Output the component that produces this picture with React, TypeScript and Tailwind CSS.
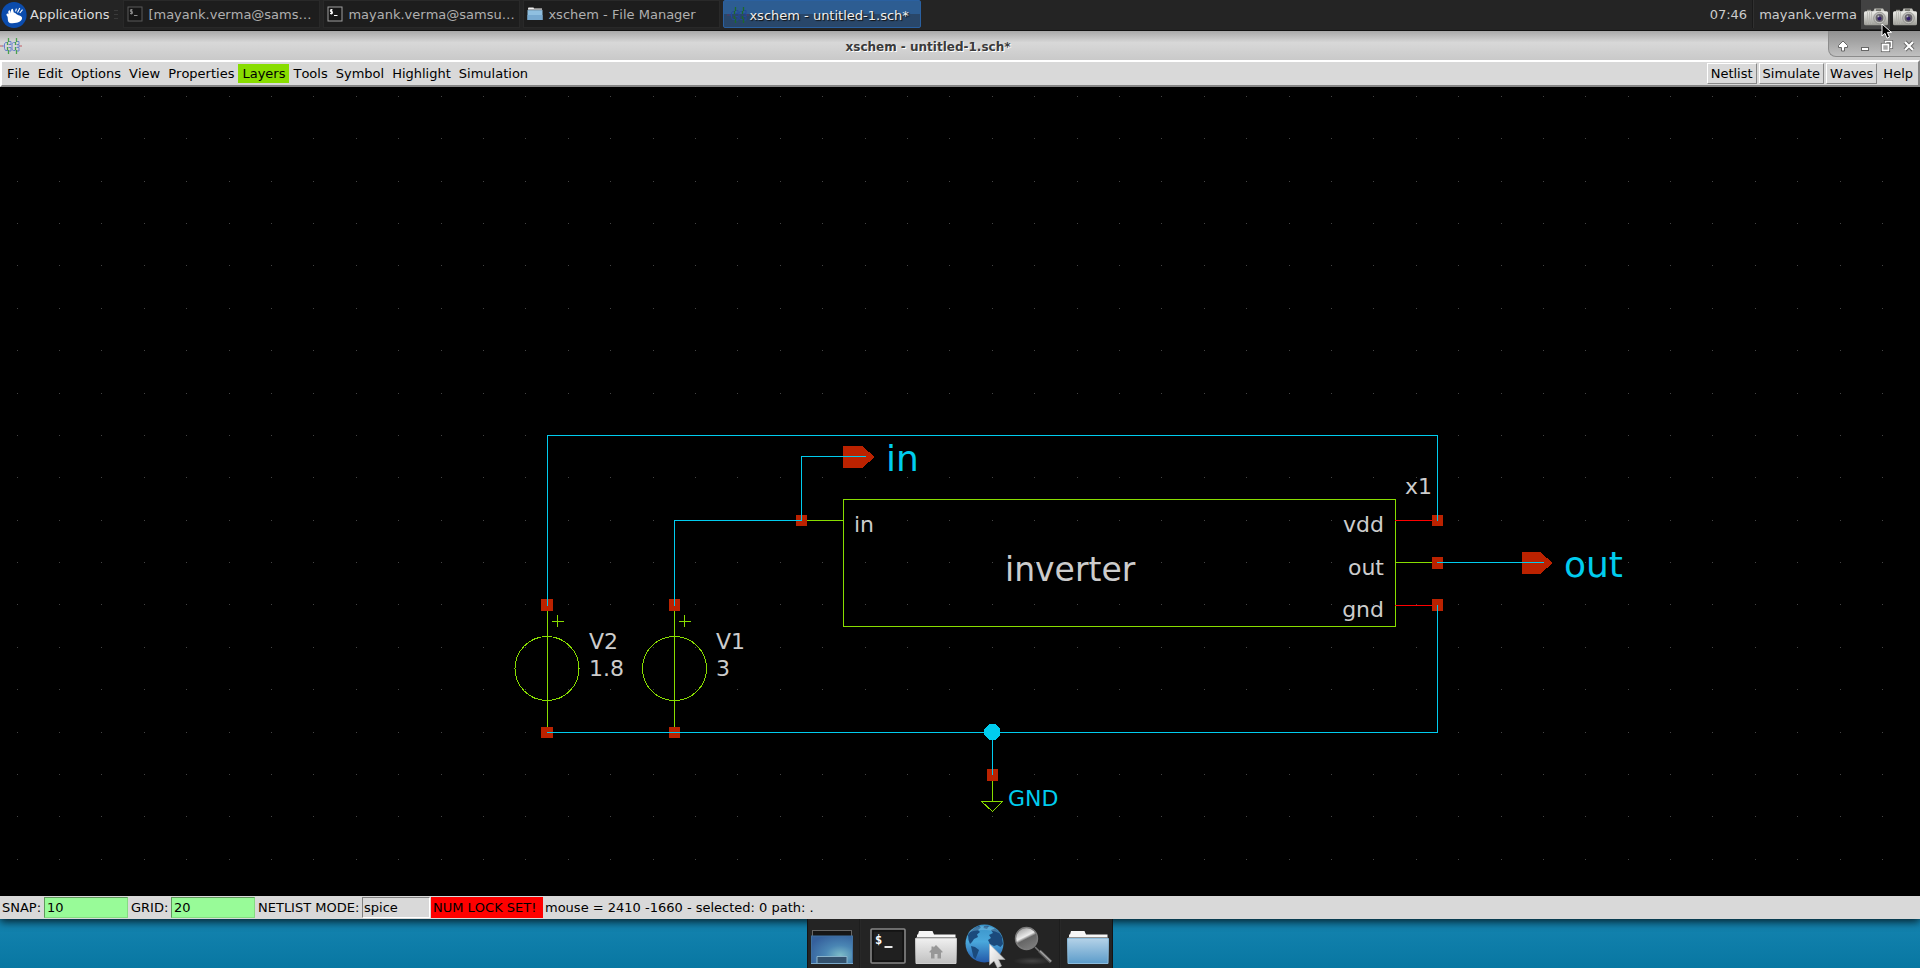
import React from "react";

const WIRE = "#00ccee";
const SYM = "#88dd00";
const PIN = "#bb2200";
const TXT = "#cccccc";
const POWER = "#ff0000";

const PITCH = 42.395;
const GRID_X = Array.from({ length: 45 }, (_, i) => Math.floor(17.19 + PITCH * i));
const GRID_Y = Array.from({ length: 19 }, (_, i) => Math.floor(96.25 + PITCH * i));

function H({ x1, x2, y, c = WIRE }: { x1: number; x2: number; y: number; c?: string }) {
  return <rect x={x1} y={y} width={x2 - x1 + 1} height={1} fill={c} />;
}

function V({ x, y1, y2, c = WIRE }: { x: number; y1: number; y2: number; c?: string }) {
  return <rect x={x} y={y1} width={1} height={y2 - y1 + 1} fill={c} />;
}

function Pin({ x, y, w = 11, h = 11 }: { x: number; y: number; w?: number; h?: number }) {
  return <rect x={x} y={y} width={w} height={h} fill={PIN} />;
}

function Source({ x, cx, plus }: { x: number; cx: number; plus: number }) {
  return (
    <g>
      <V x={x} y1={605} y2={732} c={SYM} />
      <circle cx={cx} cy={668.5} r={32} fill="none" stroke={SYM} />
      <H x1={plus - 5} x2={plus + 6} y={621} c={SYM} />
      <V x={plus} y1={615} y2={626} c={SYM} />
    </g>
  );
}

function Schematic() {
  return (
    <svg
      viewBox="0 87 1920 809"
      className="block min-h-0 w-full flex-1 bg-black"
      role="img"
      aria-label="Schematic"
      fontFamily="'DejaVu Sans', sans-serif"
    >
      <g shapeRendering="crispEdges">
        {GRID_Y.map((y) =>
          GRID_X.map((x) => <rect key={`${x}-${y}`} x={x} y={y} width={1} height={1} fill="#444444" />)
        )}
        <rect x={843.5} y={499.5} width={552} height={127} fill="none" stroke={SYM} />
        <H x1={801} x2={843} y={520} c={SYM} />
        <H x1={1395} x2={1437} y={520} c={POWER} />
        <H x1={1395} x2={1437} y={562} c={SYM} />
        <H x1={1395} x2={1437} y={605} c={POWER} />
        <Source x={547} cx={547} plus={557} />
        <Source x={674} cx={674.5} plus={684} />
        <V x={992} y1={775} y2={801} c={SYM} />
        <path d="M981.5 801.5H1002.5L992.5 811.5Z" fill="none" stroke={SYM} />

        <Pin x={541} y={599} w={12} h={12} />
        <Pin x={669} y={599} h={12} />
        <Pin x={541} y={727} w={12} />
        <Pin x={669} y={727} />
        <Pin x={796} y={515} />
        <Pin x={1432} y={515} />
        <Pin x={1432} y={557} h={12} />
        <Pin x={1432} y={599} h={12} />
        <Pin x={987} y={769} h={12} />
        <path d="M843 446H862L875 457L862 468H843Z" fill={PIN} />
        <path d="M1522 552H1540L1553 563L1540 574H1522Z" fill={PIN} />

        <V x={547} y1={435} y2={605} />
        <H x1={547} x2={1437} y={435} />
        <V x={1437} y1={435} y2={520} />
        <V x={674} y1={520} y2={605} />
        <H x1={674} x2={801} y={520} />
        <V x={801} y1={456} y2={520} />
        <H x1={801} x2={865} y={456} />
        <H x1={1437} x2={1543} y={562} />
        <V x={1437} y1={605} y2={732} />
        <H x1={547} x2={1437} y={732} />
        <V x={992} y1={732} y2={774} />
        <path d="M989 724H995L1000 729V735L995 740H989L984 735V729Z" fill={WIRE} />
      </g>
      <g fontSize={22} fill={TXT}>
        <text x={589} y={649}>V2</text>
        <text x={589} y={676}>1.8</text>
        <text x={716} y={649}>V1</text>
        <text x={716} y={676}>3</text>
        <text x={854} y={532}>in</text>
        <text x={1384} y={532} textAnchor="end">vdd</text>
        <text x={1384} y={575} textAnchor="end">out</text>
        <text x={1384} y={617} textAnchor="end">gnd</text>
        <text x={1405} y={494}>x1</text>
        <text x={1008} y={806} fill={WIRE}>GND</text>
      </g>
      <text x={1005} y={581} fontSize={33} fill={TXT}>inverter</text>
      <g fontSize={36} fill={WIRE}>
        <text x={886} y={471}>in</text>
        <text x={1564} y={577}>out</text>
      </g>
    </svg>
  );
}

function XfceLogo() {
  return (
    <svg width="26" height="28" viewBox="0 0 26 28" aria-hidden="true">
      <ellipse cx="13" cy="15" rx="12.6" ry="13" fill="#0b4cad" />
      <path
        d="M5.5 14.2C6 13 7 13.4 7.6 14.2C7.2 12.4 7 10.8 8 10.4C9.2 10 9.5 12 10 13.2C9.8 11 10 8.8 11.2 8.8C12.4 8.8 12.2 11 12.8 12.6C13.8 12.6 14.6 13.6 16 14.4C18 15.4 20.5 15.6 21 17.4C21.5 19.6 19 22 15.5 22.8C12 23.6 8 23.6 7.2 21.5C6.6 19.6 7 18 6.4 16.6C6 15.8 5.2 15.2 5.5 14.2Z"
        fill="#fff"
      />
      <path d="M16.5 12.6L18.8 8M18.8 13L21.5 9.6M14.6 11.5L15.4 8.6" stroke="#fff" strokeWidth="1.1" />
    </svg>
  );
}

function SmallTerminal({ dim = false }: { dim?: boolean }) {
  const edge = dim ? "#5a5a5a" : "#a0a0a0";
  const ink = dim ? "#8c8c8c" : "#ffffff";
  return (
    <svg width="16" height="16" viewBox="0 0 16 16" aria-hidden="true">
      <rect x="1" y="1" width="14" height="14" fill="#161616" stroke={edge} />
      <path d="M5.6 3.8H3.4V5.6H5.4V7.6H3M4.4 3V8.4M7 9.5H10.5" fill="none" stroke={ink} />
    </svg>
  );
}

function SmallFolder() {
  return (
    <svg width="16" height="16" viewBox="0 0 16 16" aria-hidden="true">
      <path d="M1 2.5L1.5 1.5H6.5L7 2.5H15V6H1Z" fill="#f2f2f2" />
      <rect x="0.5" y="4" width="15" height="10" fill="#8fbfe0" />
      <rect x="0.5" y="9" width="15" height="5" fill="#77a9d0" />
      <path d="M0.5 3.8H15.5" stroke="#3b4148" strokeWidth="0.6" />
    </svg>
  );
}

function GatesIcon({ dark = false }: { dark?: boolean }) {
  const g = dark ? "#1c6a2c" : "#4ba14e";
  const b = dark ? "#23479c" : "#6a83cf";
  const r = dark ? "#5c3a5a" : "#c25f66";
  return (
    <svg width="22" height="16" viewBox="0 0 22 16" aria-hidden="true" fill="none">
      <path d="M0 8H3M19 8H22" stroke={r} />
      <path d="M2.5 8H4M8 4.5H5.5L4.5 6V10.5L5.5 12.5H8M8.5 3.5H11V6.5H8.5M8.5 9.5H11V13H8.5M12 8V5.5L13.5 4.5H15.5M12 8V11.5L13.5 12.5H15.5M16.5 3.5H19V6.5H16.5M16.5 9.5H19V13H16.5M17.5 8H20" stroke={b} />
      <path d="M8.5 0V4M8.5 12V16M16.5 0V4M16.5 12V16M7.5 4V7M7.5 9V12M15.5 4V7M15.5 9V12" stroke={g} strokeWidth="1.3" />
    </svg>
  );
}

function Camera() {
  return (
    <svg width="24" height="18" viewBox="0 0 24 18" aria-hidden="true">
      <defs>
        <linearGradient id="cam" x1="0" y1="0" x2="0" y2="1">
          <stop offset="0" stopColor="#eeeeea" />
          <stop offset="0.4" stopColor="#cfcfca" />
          <stop offset="1" stopColor="#9c9c96" />
        </linearGradient>
      </defs>
      <path d="M10.5 0.5H19L21 4H9Z" fill="#c4c4be" />
      <rect x="12" y="1.2" width="5" height="1.8" fill="#77776f" />
      <rect x="3" y="1.8" width="4" height="2" fill="#94948e" />
      <rect x="0" y="3.2" width="24" height="14" rx="1.5" fill="url(#cam)" />
      <path d="M3.5 4V16M5.5 4V16M7.5 4V16" stroke="#b4b4ae" strokeWidth="0.8" />
      <circle cx="15.5" cy="10" r="5.8" fill="#bdbdb9" stroke="#8a8a86" strokeWidth="0.8" />
      <circle cx="15.5" cy="10" r="3.9" fill="#66646a" />
      <circle cx="15.5" cy="10.4" r="2" fill="#33206a" />
      <circle cx="14.4" cy="8.4" r="0.9" fill="#b9b5c6" />
    </svg>
  );
}

const GLYPH = "h-[14px] w-[14px]";

function WindowButtons() {
  return (
    <div className="flex h-[26px] w-[92px] items-center justify-end self-start rounded-bl-lg border-b border-l border-[#8c8c8c] bg-linear-to-b from-[#909090] via-[#a8a8a8] to-[#c0c0c0] pt-1">
      <button aria-label="Shade" className="flex h-5 w-[22px] items-center justify-center">
        <svg viewBox="0 0 14 14" className={GLYPH}>
          <path d="M7 2L11.5 6.5V8.5H8.5V12H5.5V8.5H2.5V6.5Z" fill="#fff" stroke="#666" strokeWidth="1" />
        </svg>
      </button>
      <button aria-label="Minimize" className="flex h-5 w-[22px] items-center justify-center">
        <svg viewBox="0 0 14 14" className={GLYPH}>
          <rect x="3.5" y="8.5" width="7" height="3" fill="#fff" stroke="#666" />
        </svg>
      </button>
      <button aria-label="Restore" className="flex h-5 w-[22px] items-center justify-center">
        <svg viewBox="0 0 14 14" className={GLYPH} fill="none">
          <path d="M5.5 5V2.5H11.5V8.5H9" stroke="#666" strokeWidth="3.2" />
          <path d="M5.5 5V2.5H11.5V8.5H9" stroke="#fff" strokeWidth="1.6" />
          <rect x="2.5" y="5.5" width="6" height="6" stroke="#666" strokeWidth="3.2" />
          <rect x="2.5" y="5.5" width="6" height="6" fill="#aaa" stroke="#fff" strokeWidth="1.6" />
        </svg>
      </button>
      <button aria-label="Close" className="flex h-5 w-[22px] items-center justify-center">
        <svg viewBox="0 0 14 14" className={GLYPH}>
          <path d="M3 3L11 11M11 3L3 11" stroke="#666" strokeWidth="4" />
          <path d="M3 3L11 11M11 3L3 11" stroke="#fff" strokeWidth="2.2" />
        </svg>
      </button>
    </div>
  );
}

const TASK = "flex h-7 w-[197px] items-center gap-[5px] border border-[#292929] bg-[#1d1d1d] pl-[3px] text-left whitespace-nowrap";

function Taskbar() {
  return (
    <header className="relative flex h-[31px] items-center border-b border-[#111111] bg-[#242424] pb-[2px] text-[#b0b0b0]">
      <button className="flex h-full items-center gap-[3px] pl-[1px] text-[#dddddd]">
        <XfceLogo />
        Applications
      </button>
      <div className="mx-[5px] flex w-1 flex-col gap-[3px]">
        <span className="h-px bg-[#3a3a3a]" />
        <span className="h-px bg-[#3a3a3a]" />
        <span className="h-px bg-[#3a3a3a]" />
      </div>
      <nav className="flex gap-[3px]" aria-label="Windows">
        <button className={TASK}>
          <SmallTerminal dim />
          [mayank.verma@sams…
        </button>
        <button className={TASK}>
          <SmallTerminal />
          mayank.verma@samsu…
        </button>
        <button className={TASK}>
          <SmallFolder />
          xschem - File Manager
        </button>
        <button className="flex h-7 w-[198px] items-center rounded-xs border border-[#2a60a0] bg-linear-to-b from-[#2d5d92] from-50% to-[#29476a] to-50% pt-[2px] pl-[3px] text-left whitespace-nowrap text-[#f0f0f0] text-shadow-[1px_1px_1px_#111111]">
          <GatesIcon dark />
          xschem - untitled-1.sch*
        </button>
      </nav>
      <div className="ml-auto flex h-full items-center text-[#cccccc]">
        <span>07:46</span>
        <span className="mx-[5px] h-7 w-[2px] border-l border-[#1a1a1a] bg-[#303030]" />
        <span className="mr-1">mayank.verma</span>
        <button aria-label="Screenshot" className="flex h-[29px] w-[29px] items-center justify-center self-start bg-[#424242] pt-[5px]">
          <Camera />
        </button>
        <button aria-label="Screenshot tool" className="flex h-[29px] w-[30px] items-center justify-center self-start pt-[5px]">
          <Camera />
        </button>
      </div>
      <svg className="absolute top-[23px] right-[27px] z-10" width="12" height="17" viewBox="0 0 12 17" aria-hidden="true">
        <path d="M1 1V13L4 10.3L6 15.2L8.5 14.1L6.4 9.4H10.5Z" fill="#000" stroke="#fff" strokeWidth="1" />
      </svg>
    </header>
  );
}

const MENU = "h-[19px] px-1";
const RAISED = "h-[21px] border border-t-white border-r-[#888888] border-b-[#888888] border-l-white px-[3px]";

function MenuBar() {
  return (
    <nav
      className="flex h-[27px] items-center justify-between border-2 border-t-white border-r-[#858585] border-b-[#858585] border-l-white bg-[#d9d9d9] pr-[1px] pl-[1px]"
      aria-label="Menu"
    >
      <div className="flex items-center">
        <button className={MENU}>File</button>
        <button className={MENU}>Edit</button>
        <button className={MENU}>Options</button>
        <button className={MENU}>View</button>
        <button className={MENU}>Properties</button>
        <button className="h-[19px] bg-[#88dd00] px-1">Layers</button>
        <button className={MENU}>Tools</button>
        <button className={MENU}>Symbol</button>
        <button className={MENU}>Highlight</button>
        <button className={MENU}>Simulation</button>
      </div>
      <div className="flex items-center gap-[2px]">
        <button className={RAISED}>Netlist</button>
        <button className={RAISED}>Simulate</button>
        <button className={RAISED}>Waves</button>
        <button className={MENU}>Help</button>
      </div>
    </nav>
  );
}

const FIELD = "h-[21px] w-[84px] border border-t-[#5f9a5c] border-r-[#84dc81] border-b-[#84dc81] border-l-[#5f9a5c] bg-[#98fb98] px-[2px]";

function StatusBar() {
  return (
    <footer className="relative flex h-[23px] items-center bg-[#d9d9d9] pl-[2px] whitespace-nowrap shadow-[0_3px_9px_rgba(0,0,0,0.75)]">
      <label htmlFor="snap" className="w-[42px]">SNAP:</label>
      <input id="snap" defaultValue="10" className={FIELD} />
      <label htmlFor="grid" className="w-[43px] pl-[3px]">GRID:</label>
      <input id="grid" defaultValue="20" className={FIELD} />
      <label htmlFor="mode" className="w-[107px] pl-[3px]">NETLIST MODE:</label>
      <input
        id="mode"
        defaultValue="spice"
        className="h-[21px] w-[68px] border border-t-[#828282] border-r-white border-b-white border-l-[#828282] px-[1px]"
      />
      <span className="ml-[1px] h-[21px] w-[112px] bg-[#ff0000] pl-[2px] leading-[21px]">NUM LOCK SET!</span>
      <span className="pl-[2px]">mouse = 2410 -1660 - selected: 0 path: .</span>
    </footer>
  );
}

function DesktopIcon() {
  return (
    <svg width="48" height="48" viewBox="0 0 48 48" aria-hidden="true">
      <defs>
        <radialGradient id="desk" cx="0.7" cy="0.7" r="0.8">
          <stop offset="0" stopColor="#7dbcc8" />
          <stop offset="0.45" stopColor="#4a86b4" />
          <stop offset="1" stopColor="#35609c" />
        </radialGradient>
      </defs>
      <rect x="4.5" y="10.5" width="39" height="6" fill="#161616" stroke="#666" />
      <rect x="3.5" y="16" width="41" height="27.5" fill="url(#desk)" stroke="#41719f" />
      <path d="M9 43.5V36.5H39V43.5" fill="#34526e" stroke="#8ab4cc" />
      <path d="M3 43.5H45" stroke="#7aa8c8" />
    </svg>
  );
}

function TerminalIcon() {
  return (
    <svg width="48" height="48" viewBox="0 0 48 48" aria-hidden="true">
      <rect x="7" y="9" width="34" height="34" rx="1" fill="#1b1b1b" stroke="#858585" strokeWidth="1.6" />
      <rect x="9" y="11" width="30" height="30" fill="#202020" stroke="#0c0c0c" />
      <text x="11" y="24" fontSize="12" fontWeight="700" fontFamily="'DejaVu Sans Mono', monospace" fill="#fff">$</text>
      <path d="M20.5 27H28.5" stroke="#fff" strokeWidth="1.8" />
    </svg>
  );
}

function FolderIcon({ home = false }: { home?: boolean }) {
  const id = home ? "folder-home" : "folder-blue";
  return (
    <svg width="48" height="48" viewBox="0 0 48 48" aria-hidden="true">
      <defs>
        <linearGradient id={id} x1="0" y1="0" x2="0" y2="1">
          <stop offset="0" stopColor={home ? "#f0f0f0" : "#b4d2e8"} />
          <stop offset="1" stopColor={home ? "#c0c0c0" : "#5c9cca"} />
        </linearGradient>
      </defs>
      <path d="M5 19V14.5H6L7 11H20.5L22 14.5H43.5V19Z" fill="#f6f6f6" />
      <path d="M4 17.5H44" stroke="#777" strokeWidth="0.8" />
      <path d="M3.5 18.5H44.5L44 43.5H4Z" fill={`url(#${id})`} stroke={home ? "#cfcfcf" : "#8dbcdc"} strokeWidth="1" />
      {home && <path d="M24 25L30.5 31.5V32.5H29V38.5H25.5V34H22.5V38.5H19V32.5H17.5V31.5L19.5 29.5V26.5H21.5V27.5Z" fill="#979797" />}
    </svg>
  );
}

function GlobeIcon() {
  return (
    <svg width="48" height="48" viewBox="0 0 48 48" aria-hidden="true">
      <defs>
        <linearGradient id="globe" x1="0" y1="0" x2="0" y2="1">
          <stop offset="0" stopColor="#3b93c8" />
          <stop offset="0.45" stopColor="#4aa8dc" />
          <stop offset="1" stopColor="#2358a8" />
        </linearGradient>
        <linearGradient id="pointer" x1="0" y1="0" x2="1" y2="1">
          <stop offset="0" stopColor="#ffffff" />
          <stop offset="1" stopColor="#c2c2c2" />
        </linearGradient>
      </defs>
      <circle cx="24.5" cy="23.5" r="19" fill="url(#globe)" />
      <path
        d="M8 15C11 10 15 7 19 6L21 7.5L18 10L20 12L17 14.5L18 17L14 19L12 22L10 24L8.5 20ZM11 26L15 27L19 30L17.5 34L15.5 39L13.5 37L12 31ZM24 6L29 5.8L27 9L23.5 8ZM31 10L35 8.5L39 12L42 17L43 24L40.5 27L37 25L34 26L30 24L28 20L31 18L29 15L33 13Z"
        fill="#1b4a7c"
      />
      <path d="M8 13C13 5 34 3 40 14C34 9 15 9 8 13Z" fill="#8fd0ee" opacity="0.35" />
      <path d="M29.5 24V45L34 41L37.5 48L41.5 46L38.5 39.5H45Z" fill="url(#pointer)" stroke="#b0b0b0" strokeWidth="0.6" />
    </svg>
  );
}

function SearchIcon() {
  return (
    <svg width="48" height="48" viewBox="0 0 48 48" aria-hidden="true">
      <defs>
        <linearGradient id="lens" x1="0" y1="0" x2="0.5" y2="1">
          <stop offset="0" stopColor="#8a8a8a" />
          <stop offset="0.5" stopColor="#ececec" />
          <stop offset="0.62" stopColor="#666666" />
          <stop offset="1" stopColor="#7a7a7a" />
        </linearGradient>
        <radialGradient id="ground">
          <stop offset="0" stopColor="#444444" />
          <stop offset="1" stopColor="#242424" />
        </radialGradient>
      </defs>
      <ellipse cx="24" cy="41" rx="19" ry="4" fill="url(#ground)" />
      <path d="M27 27L33 33" stroke="#777" strokeWidth="1.6" />
      <path d="M31.5 31L43 42" stroke="#5c5c5c" strokeWidth="3.4" />
      <path d="M32 31L43 41.5" stroke="#a4a4a4" strokeWidth="1.4" />
      <circle cx="18.5" cy="18.5" r="11" fill="url(#lens)" stroke="#7c7c7c" strokeWidth="1.4" />
    </svg>
  );
}

function Dock() {
  return (
    <div className="flex h-[49px] justify-center bg-linear-to-b from-[#1484b0] to-[#0877a2]">
      <nav className="relative flex border-x border-[#141414] bg-[#242424]" aria-label="Dock">
        <button aria-label="Show desktop"><DesktopIcon /></button>
        <span className="mx-[3px] w-[2px] border-l border-[#1d1d1d] bg-[#282828]" />
        <button aria-label="Terminal"><TerminalIcon /></button>
        <button aria-label="Home"><FolderIcon home /></button>
        <button aria-label="Web browser"><GlobeIcon /></button>
        <button aria-label="Find"><SearchIcon /></button>
        <span className="mx-[3px] w-[2px] border-l border-[#1d1d1d] bg-[#282828]" />
        <button aria-label="Files"><FolderIcon /></button>
      </nav>
    </div>
  );
}

export default function App() {
  return (
    <div className="flex min-h-screen flex-col bg-black font-['DejaVu_Sans',sans-serif] text-[13px] leading-[19px] text-black [font-kerning:none]">
      <Taskbar />
      <div className="flex h-[29px] items-center bg-linear-to-b from-[#a8a8a8] via-[#d8d8d8] via-40% to-[#c9c9c9]">
        <span className="w-7">
          <GatesIcon />
        </span>
        <h1 className="flex-1 pt-[3px] text-center text-[12px] font-bold text-[#3a3a3a] text-shadow-[1px_1px_0_#ffffff]">
          xschem - untitled-1.sch*
        </h1>
        <WindowButtons />
      </div>
      <MenuBar />
      <Schematic />
      <StatusBar />
      <Dock />
    </div>
  );
}
